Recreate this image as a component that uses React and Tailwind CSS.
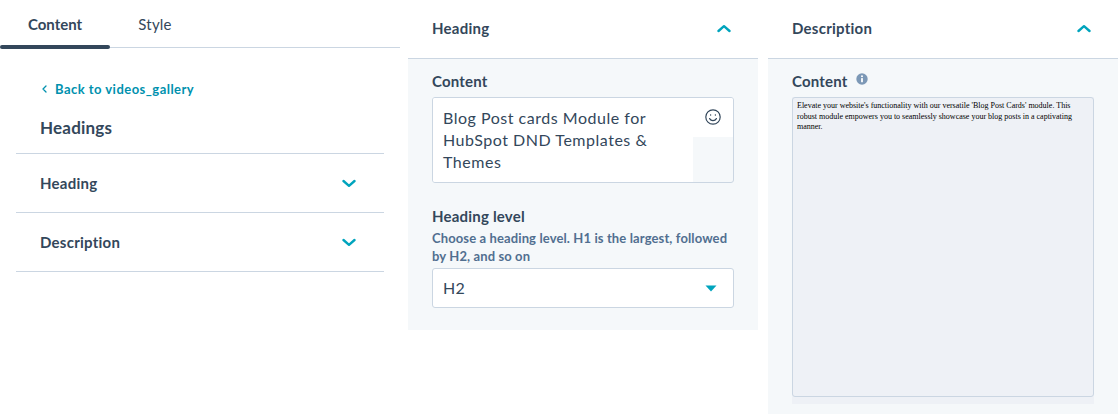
import React from "react";

const font = { fontFamily: '"Lato", "Noto Sans", sans-serif' };

function Chevron({ up = false, className = "" }) {
  return (
    <svg width="14" height="9" viewBox="0 0 14 9" fill="none" className={className}>
      <path
        d={up ? "M1.5 7L7 2.2L12.5 7" : "M1.5 2L7 6.8L12.5 2"}
        stroke="#00a4bd"
        strokeWidth="2.4"
        strokeLinecap="round"
        strokeLinejoin="round"
      />
    </svg>
  );
}

function Row({ label }) {
  return (
    <div className="flex h-[59px] items-center justify-between border-b border-[#cbd6e2] pl-6 pr-[28px]">
      <span className="text-[15px] font-bold tracking-[0.25px] text-[#33475b]">{label}</span>
      <Chevron />
    </div>
  );
}

function PanelHeader({ label }) {
  return (
    <div className="flex h-[59px] items-center justify-between border-b border-[#cbd6e2] pb-[1px] pl-6 pr-[27px]">
      <span className="text-[15px] font-bold tracking-[0.25px] text-[#33475b]">{label}</span>
      <Chevron up className="mb-[1px]" />
    </div>
  );
}

function Sidebar() {
  return (
    <div className="w-[400px] shrink-0">
      <div className="flex h-[48px] border-b border-[#cbd6e2]">
        <div className="relative flex h-[48px] w-[110px] justify-center pt-[13px] text-[15px] font-bold text-[#33475b]">
          Content
          <div className="absolute bottom-[-1px] left-0 h-[4px] w-[110px] rounded-full bg-[#33475b]" />
        </div>
        <div className="flex w-[90px] justify-center pt-[13px] text-[15px] tracking-[0.2px] text-[#33475b]">Style</div>
      </div>
      <div className="pl-4 pr-4">
        <div className="flex items-center gap-[8px] pl-[26px] pt-[32px] text-[13px] font-bold leading-[18px] tracking-[0.47px] text-[#0091ae]">
          <svg width="5" height="8" viewBox="0 0 5 8" fill="none">
            <path d="M4 1L1 4L4 7" stroke="#0091ae" strokeWidth="1.3" strokeLinecap="round" strokeLinejoin="round" />
          </svg>
          <span>Back to videos_gallery</span>
        </div>
        <div className="border-b border-[#cbd6e2] pb-[13px] pl-6 pt-[18px] text-[17px] font-bold leading-[24px] tracking-[0.2px] text-[#33475b]">
          Headings
        </div>
        <Row label="Heading" />
        <Row label="Description" />
      </div>
    </div>
  );
}

function HeadingPanel() {
  return (
    <div className="ml-2 w-[350px] shrink-0">
      <PanelHeader label="Heading" />
      <div className="h-[271px] bg-[#f5f8fa] px-6 pt-[12px]">
        <div className="text-[15px] font-bold leading-[20px] tracking-[0.2px] text-[#33475b]">Content</div>
        <div className="mt-[6px] flex h-[86px] overflow-hidden rounded-[3px] border border-[#cbd6e2]">
          <div className="w-[260px] bg-white px-[10px] pt-[9px] text-[16px] leading-[22px] tracking-[0.52px] text-[#33475b]">
            Blog Post cards Module for HubSpot DND Templates &amp; Themes
          </div>
          <div className="flex-1">
            <div className="flex h-[39px] items-start justify-center bg-white pr-[1px] pt-[11px]">
              <svg width="16" height="16" viewBox="0 0 16 16" fill="none" stroke="#33475b" strokeWidth="1.2" strokeLinecap="round">
                <circle cx="8" cy="8" r="7.2" />
                <path d="M4.6 9.6C5.4 11 6.6 11.6 8 11.6C9.4 11.6 10.6 11 11.4 9.6" />
                <circle cx="5.6" cy="6" r="0.7" fill="#33475b" stroke="none" />
                <circle cx="10.4" cy="6" r="0.7" fill="#33475b" stroke="none" />
              </svg>
            </div>
          </div>
        </div>
        <div className="mt-[23px] text-[15px] font-bold leading-[20px] tracking-[0.2px] text-[#33475b]">Heading level</div>
        <div className="mt-[3px] text-[13px] font-bold leading-[18px] tracking-[0.12px] text-[#516f90]">
          Choose a heading level. H1 is the largest, followed by H2, and so on
        </div>
        <div className="mt-[3px] flex h-[40px] items-center justify-between rounded-[3px] border border-[#cbd6e2] bg-white pl-[10px] pr-[16px] text-[16px] tracking-[0.25px] text-[#33475b]">
          <span>H2</span>
          <svg width="12" height="7" viewBox="0 0 12 7">
            <path d="M0.5 0.5H11.5L6 6.5Z" fill="#00a4bd" />
          </svg>
        </div>
      </div>
    </div>
  );
}

function DescriptionPanel() {
  return (
    <div className="ml-[10px] w-[350px] shrink-0">
      <PanelHeader label="Description" />
      <div className="h-[355px] bg-[#f5f8fa] px-6 pt-[12px]">
        <div className="flex items-center gap-[8px] text-[15px] font-bold leading-[20px] tracking-[0.2px] text-[#33475b]">
          <span>Content</span>
          <svg width="12" height="12" viewBox="0 0 12 12" className="mb-[4px]">
            <circle cx="6" cy="6" r="5.7" fill="#7c98b6" />
            <rect x="5.1" y="5" width="1.8" height="4.2" rx="0.5" fill="#fff" />
            <circle cx="6" cy="3.3" r="1" fill="#fff" />
          </svg>
        </div>
        <div className="mt-[6px] h-[307px] bg-[#eef1f6]">
          <div
            className="h-[300px] rounded-[3px] border border-[#cbd6e2] px-1 pt-[3px] text-[8px] leading-[10.5px] text-black"
            style={{ fontFamily: '"Liberation Serif", serif' }}
          >
            Elevate your website's functionality with our versatile 'Blog Post Cards' module. This robust module empowers you to seamlessly showcase your blog posts in a captivating manner.
          </div>
        </div>
      </div>
    </div>
  );
}

export default function App() {
  return (
    <div className="flex h-[414px] w-[1118px] overflow-hidden bg-white" style={font}>
      <Sidebar />
      <HeadingPanel />
      <DescriptionPanel />
    </div>
  );
}
